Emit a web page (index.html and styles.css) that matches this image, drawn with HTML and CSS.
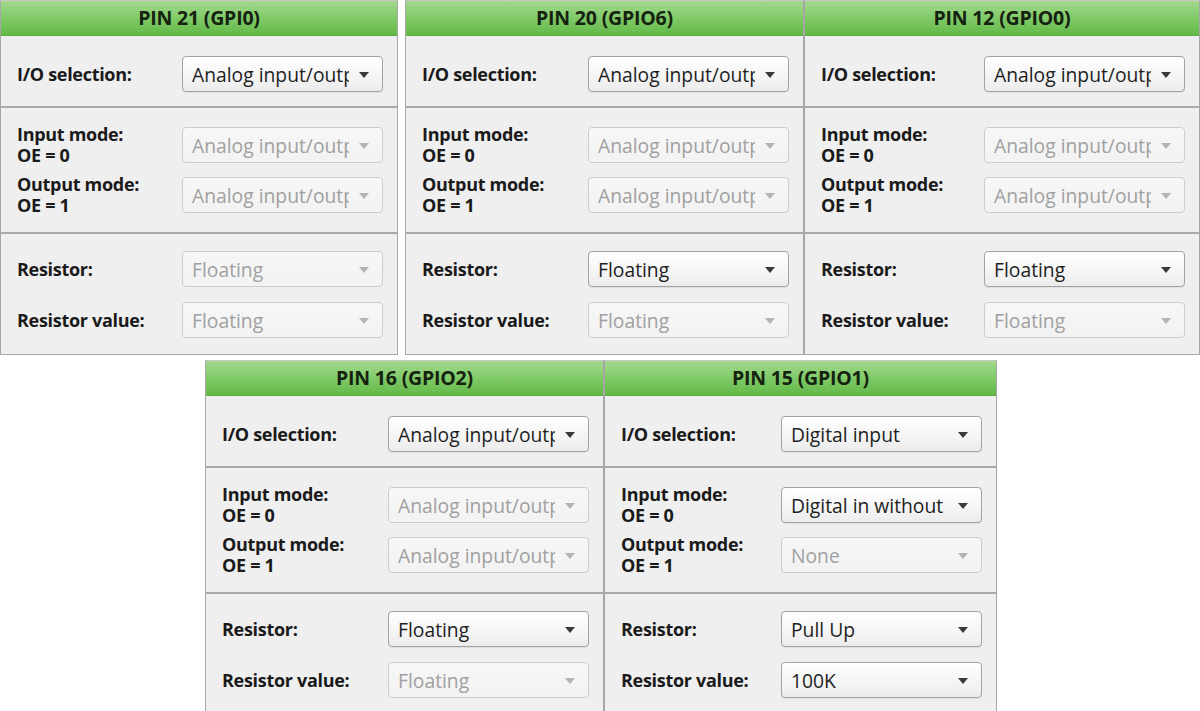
FILE: index.html
```html
<!DOCTYPE html>
<html>
<head>
<meta charset="utf-8">
<link rel="stylesheet" href="styles.css">
</head>
<body>
<div class="page">
  <div class="row row-top">
    <div class="panel w1">
      <div class="ph">PIN 21 (GPI0)</div>
      <div class="sec s1">
        <div class="fr"><span class="lb">I/O selection:</span><div class="dd"><span class="tx">Analog input/output</span><i class="ar"></i></div></div>
      </div>
      <div class="sec s2">
        <div class="fr"><span class="lb">Input mode:<br>OE = 0</span><div class="dd dis"><span class="tx">Analog input/output</span><i class="ar"></i></div></div>
        <div class="fr"><span class="lb">Output mode:<br>OE = 1</span><div class="dd dis"><span class="tx">Analog input/output</span><i class="ar"></i></div></div>
      </div>
      <div class="sec s3">
        <div class="fr"><span class="lb">Resistor:</span><div class="dd dis"><span class="tx">Floating</span><i class="ar"></i></div></div>
        <div class="fr"><span class="lb">Resistor value:</span><div class="dd dis"><span class="tx">Floating</span><i class="ar"></i></div></div>
      </div>
    </div>
    <div class="panel w2">
      <div class="ph">PIN 20 (GPIO6)</div>
      <div class="sec s1">
        <div class="fr"><span class="lb">I/O selection:</span><div class="dd"><span class="tx">Analog input/output</span><i class="ar"></i></div></div>
      </div>
      <div class="sec s2">
        <div class="fr"><span class="lb">Input mode:<br>OE = 0</span><div class="dd dis"><span class="tx">Analog input/output</span><i class="ar"></i></div></div>
        <div class="fr"><span class="lb">Output mode:<br>OE = 1</span><div class="dd dis"><span class="tx">Analog input/output</span><i class="ar"></i></div></div>
      </div>
      <div class="sec s3">
        <div class="fr"><span class="lb">Resistor:</span><div class="dd"><span class="tx">Floating</span><i class="ar"></i></div></div>
        <div class="fr"><span class="lb">Resistor value:</span><div class="dd dis"><span class="tx">Floating</span><i class="ar"></i></div></div>
      </div>
    </div>
    <div class="panel w3">
      <div class="ph">PIN 12 (GPIO0)</div>
      <div class="sec s1">
        <div class="fr"><span class="lb">I/O selection:</span><div class="dd"><span class="tx">Analog input/output</span><i class="ar"></i></div></div>
      </div>
      <div class="sec s2">
        <div class="fr"><span class="lb">Input mode:<br>OE = 0</span><div class="dd dis"><span class="tx">Analog input/output</span><i class="ar"></i></div></div>
        <div class="fr"><span class="lb">Output mode:<br>OE = 1</span><div class="dd dis"><span class="tx">Analog input/output</span><i class="ar"></i></div></div>
      </div>
      <div class="sec s3">
        <div class="fr"><span class="lb">Resistor:</span><div class="dd"><span class="tx">Floating</span><i class="ar"></i></div></div>
        <div class="fr"><span class="lb">Resistor value:</span><div class="dd dis"><span class="tx">Floating</span><i class="ar"></i></div></div>
      </div>
    </div>
  </div>
  <div class="row row-bottom">
    <div class="panel w4">
      <div class="ph">PIN 16 (GPIO2)</div>
      <div class="sec s1">
        <div class="fr"><span class="lb">I/O selection:</span><div class="dd"><span class="tx">Analog input/output</span><i class="ar"></i></div></div>
      </div>
      <div class="sec s2">
        <div class="fr"><span class="lb">Input mode:<br>OE = 0</span><div class="dd dis"><span class="tx">Analog input/output</span><i class="ar"></i></div></div>
        <div class="fr"><span class="lb">Output mode:<br>OE = 1</span><div class="dd dis"><span class="tx">Analog input/output</span><i class="ar"></i></div></div>
      </div>
      <div class="sec s3">
        <div class="fr"><span class="lb">Resistor:</span><div class="dd"><span class="tx">Floating</span><i class="ar"></i></div></div>
        <div class="fr"><span class="lb">Resistor value:</span><div class="dd dis"><span class="tx">Floating</span><i class="ar"></i></div></div>
      </div>
    </div>
    <div class="panel w5">
      <div class="ph">PIN 15 (GPIO1)</div>
      <div class="sec s1">
        <div class="fr"><span class="lb">I/O selection:</span><div class="dd"><span class="tx">Digital input</span><i class="ar"></i></div></div>
      </div>
      <div class="sec s2">
        <div class="fr"><span class="lb">Input mode:<br>OE = 0</span><div class="dd"><span class="tx">Digital in without pull</span><i class="ar"></i></div></div>
        <div class="fr"><span class="lb">Output mode:<br>OE = 1</span><div class="dd dis"><span class="tx">None</span><i class="ar"></i></div></div>
      </div>
      <div class="sec s3">
        <div class="fr"><span class="lb">Resistor:</span><div class="dd"><span class="tx">Pull Up</span><i class="ar"></i></div></div>
        <div class="fr"><span class="lb">Resistor value:</span><div class="dd"><span class="tx">100K</span><i class="ar"></i></div></div>
      </div>
    </div>
  </div>
</div>
</body>
</html>
```
FILE: styles.css
```css
html, body {
  margin: 0;
  padding: 0;
  background: #ffffff;
}
body {
  font-family: "Open Sans", "Noto Sans", sans-serif;
  color: #1c1c1c;
  width: 1200px;
  height: 711px;
  overflow: hidden;
}
.row {
  display: flex;
  align-items: flex-start;
}
.row-bottom {
  margin-top: 5px;
  padding-left: 205px;
}
.panel {
  box-sizing: border-box;
  background: #efefef;
  border: 1px solid #a6a6a6;
  border-top-color: #c8c8c8;
  display: flex;
  flex-direction: column;
}
.w1 { width: 398px; margin-right: 7px; }
.w2 { width: 399px; }
.w3 { width: 396px; }
.w4 { width: 399px; }
.w5 { width: 393px; }

.ph {
  height: 35px;
  box-sizing: border-box;
  background: linear-gradient(#a3da8d, #80ca69 50%, #63b947);
  border-bottom: 1px solid #5ea946;
  font-weight: 700;
  font-size: 19.5px;
  line-height: 34px;
  text-align: center;
  color: #15220f;
  letter-spacing: -0.2px;
}
.sec {
  box-sizing: border-box;
  display: flex;
  flex-direction: column;
  padding: 0 14px 0 16px;
}
.s1 {
  height: 72px;
  padding-top: 20px;
  border-bottom: 2px solid #a9a9a9;
}
.s2 {
  height: 126px;
  padding-top: 19px;
  gap: 14px;
  border-bottom: 2px solid #a9a9a9;
}
.s3 {
  height: 120px;
  padding-top: 17px;
  gap: 15px;
}
.fr {
  display: flex;
  align-items: center;
  justify-content: space-between;
  height: 36px;
}
.lb {
  font-weight: 700;
  font-size: 18px;
  line-height: 21px;
  letter-spacing: -0.3px;
  color: #1a1a1a;
}
.dd {
  box-sizing: border-box;
  width: 201px;
  height: 36px;
  border: 1px solid #a2a2a2;
  border-radius: 4px;
  background: linear-gradient(#ffffff, #f6f6f6 50%, #ececec);
  box-shadow: 0 1px 0 rgba(0,0,0,0.06);
  display: flex;
  align-items: center;
  padding-left: 9px;
  position: relative;
}
.tx {
  width: 157px;
  overflow: hidden;
  white-space: nowrap;
  font-size: 19.3px;
  color: #1e1e1e;
}
.ar {
  position: absolute;
  right: 13px;
  top: 15px;
  width: 0;
  height: 0;
  border-left: 5px solid transparent;
  border-right: 5px solid transparent;
  border-top: 6px solid #3a3a3a;
}
.dd.dis {
  border-color: #cdcdcd;
  background: linear-gradient(#f7f7f7, #f2f2f2);
  box-shadow: none;
}
.dd.dis .tx {
  color: #a0a0a0;
}
.dd.dis .ar {
  border-top-color: #b4b4b4;
}
```
